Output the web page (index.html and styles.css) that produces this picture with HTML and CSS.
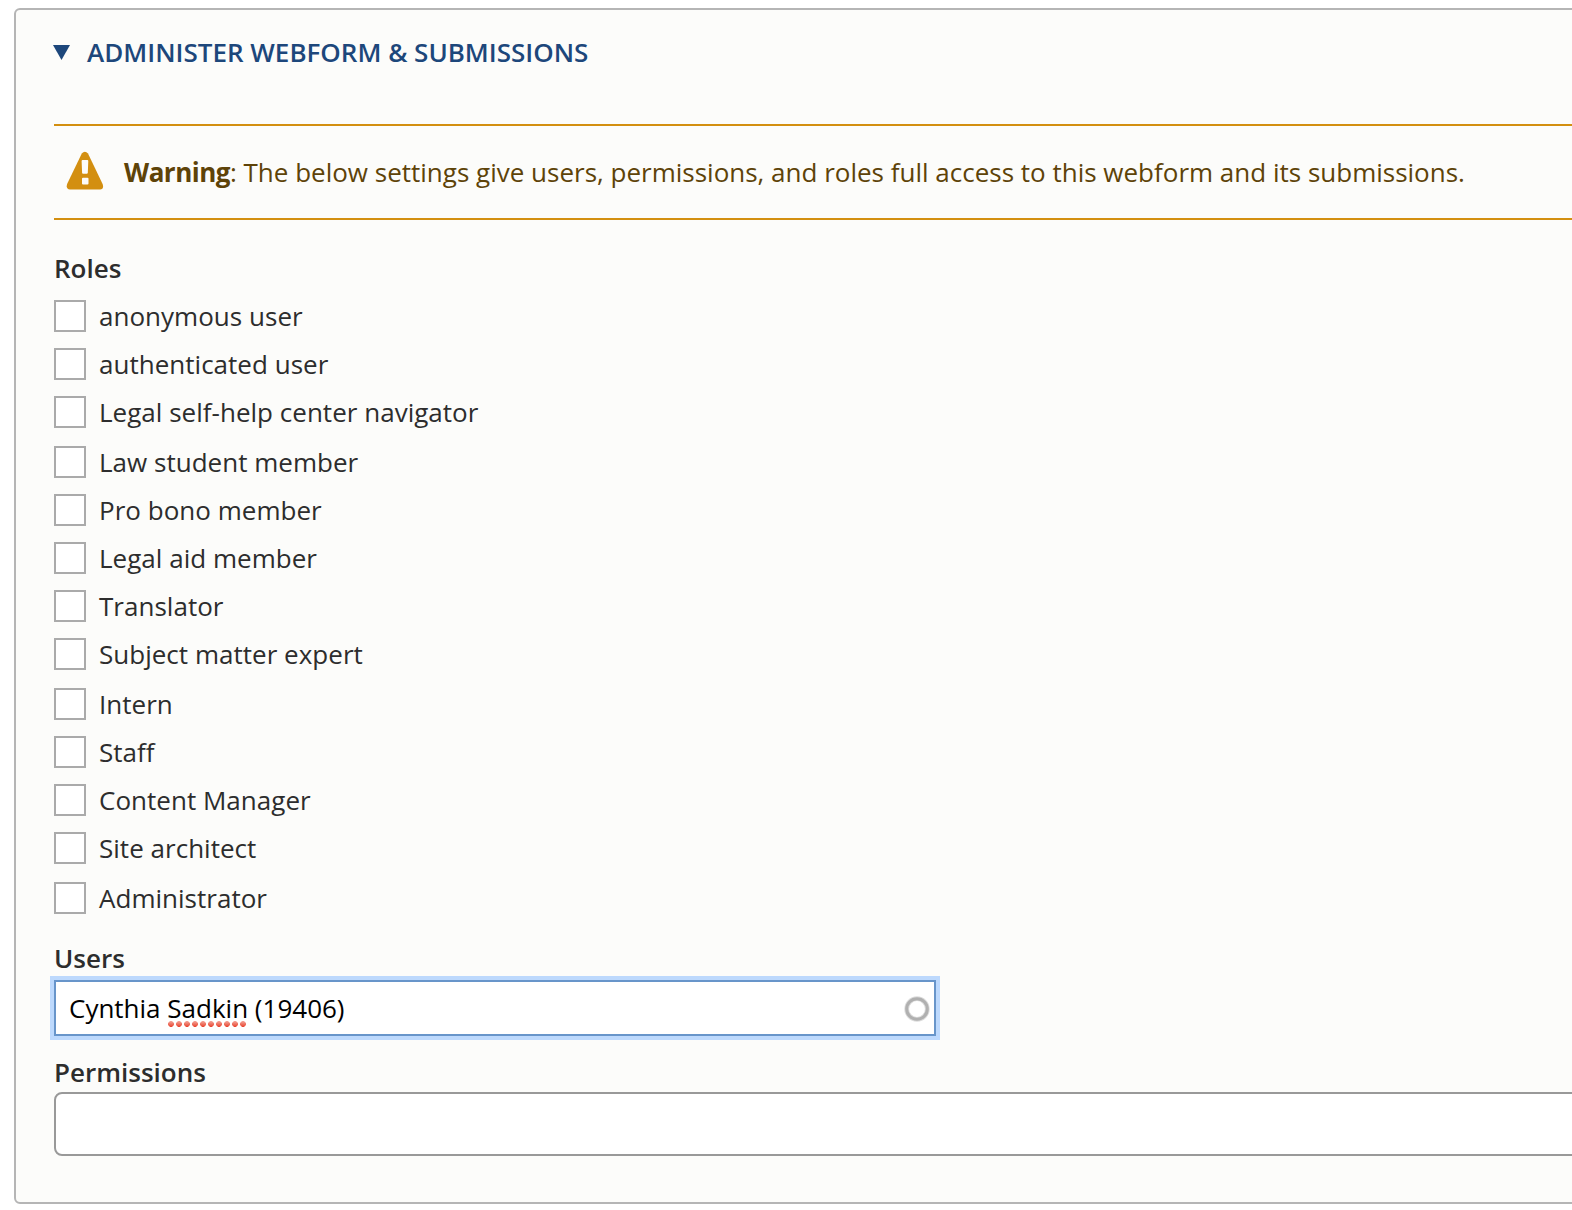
FILE: index.html
```html
<!DOCTYPE html>
<html lang="en">
<head>
<meta charset="utf-8">
<title>Webform access</title>
<link rel="stylesheet" href="styles.css">
</head>
<body>
<section class="panel">
  <h2 class="panel-title"><svg class="arrow" width="18" height="15" viewBox="0 0 18 15"><path d="M0 0h17L8.500 15z" fill="#1d477b"/></svg><span class="title-text">Administer webform &amp; submissions</span></h2>
  <div class="warning">
    <svg class="warning-icon" width="38" height="40" viewBox="0 0 38 40"><path d="M15.800 2.500Q18.800-1 22 2.500L36.600 33Q38.300 38 34 38.600H4Q-.4 38 1.100 33Z" fill="#d38f10"/><path d="M16.300 9h5.400l.6.800-.5 12.200-.7.800h-4.400l-.6-.8-.5-12.200zM17 26.800h4.500q1 0 1 1v4.700q0 1-1 1H17q-1 0-1-1v-4.700q0-1 1-1z" fill="#fcfcfa"/></svg>
    <p class="warning-text"><b>Warning</b>: The below settings give users, permissions, and roles full access to this webform and its submissions.</p>
  </div>
  <div class="label">Roles</div>
  <div class="roles">
    <label class="role"><input type="checkbox" class="box"><span>anonymous user</span></label>
    <label class="role"><input type="checkbox" class="box"><span>authenticated user</span></label>
    <label class="role wide"><input type="checkbox" class="box"><span>Legal self-help center navigator</span></label>
    <label class="role"><input type="checkbox" class="box"><span>Law student member</span></label>
    <label class="role"><input type="checkbox" class="box"><span>Pro bono member</span></label>
    <label class="role"><input type="checkbox" class="box"><span>Legal aid member</span></label>
    <label class="role"><input type="checkbox" class="box"><span>Translator</span></label>
    <label class="role wide"><input type="checkbox" class="box"><span>Subject matter expert</span></label>
    <label class="role"><input type="checkbox" class="box"><span>Intern</span></label>
    <label class="role"><input type="checkbox" class="box"><span>Staff</span></label>
    <label class="role"><input type="checkbox" class="box"><span>Content Manager</span></label>
    <label class="role wide"><input type="checkbox" class="box"><span>Site architect</span></label>
    <label class="role"><input type="checkbox" class="box"><span>Administrator</span></label>
  </div>
  <div class="label users-label">Users</div>
  <div class="users-field"><span class="value">Cynthia <span class="misspelled">Sadkin</span> (19406)</span><svg class="throbber" width="26" height="26" viewBox="0 0 26 26"><circle cx="13" cy="13" r="10.300" fill="none" stroke="#dcdcdc" stroke-width="4.800"/><circle cx="13" cy="13" r="10.300" fill="none" stroke="#b0b0b0" stroke-width="3"/></svg></div>
  <div class="label permissions-label">Permissions</div>
  <div class="permissions-field"></div>
</section>
</body>
</html>
```
FILE: styles.css
```css
* { box-sizing: border-box; }
body {
  margin: 0;
  padding: 8px 0 0 14px;
  background: #fff;
  color: #2d2d2d;
  font: 26px/48px "Open Sans", sans-serif;
  overflow: hidden;
}
.panel {
  width: 1620px;
  height: 1196px;
  padding: 18px 38px 0;
  border: 2px solid #b5b5b5;
  border-radius: 6px;
  background: #fcfcfa;
}
.panel-title {
  display: flex;
  align-items: center;
  gap: 16px;
  height: 48px;
  margin: 0 0 48px -1px;
  color: #1d477b;
  font-size: 26px;
  font-weight: 600;
  text-transform: uppercase;
}
.title-text { white-space: nowrap; }
.warning {
  display: flex;
  align-items: flex-start;
  height: 96px;
  padding: 22px 0 0 12px;
  border: solid #d38f10;
  border-width: 2px 0;
  color: #5e4308;
}
.warning-icon { flex: none; margin-top: 3px; }
.warning-text { margin: 0 0 0 20px; white-space: nowrap; }
.warning-text b { font-weight: 700; letter-spacing: -0.5px; }
.label { height: 48px; font-weight: 600; }
.warning + .label { margin-top: 24px; }
.role { display: flex; height: 48px; gap: 13px; letter-spacing: 0.02px; }
.wide { height: 50px; }
.box {
  appearance: none;
  flex: none;
  width: 32px;
  height: 32px;
  margin: 8px 0 0;
  border: 2px solid #aaa;
  background: #fff;
}
.users-label { margin-top: 12px; height: 46px; }
.users-field {
  display: flex;
  align-items: center;
  justify-content: space-between;
  width: 882px;
  height: 56px;
  padding: 0 4px 0 13px;
  border: 2px solid #6895ca;
  background: #fff;
  box-shadow: 0 0 0 4px #bdd9fd;
  color: #000;
}
.misspelled {
  padding-bottom: 1px;
  background:
    linear-gradient(#fff, #fff) 100% 100% / 1px 6px no-repeat,
    radial-gradient(circle at 3px 3px, transparent 2.6px, #fff 3.2px) 1px 100% / 8px 6px repeat-x,
    linear-gradient(#f3a79c, #e9412c) 0 100% / 100% 6px no-repeat;
}
.throbber { position: relative; top: 1px; }
.permissions-label { margin-top: 12px; height: 44px; }
.permissions-field {
  height: 64px;
  border: 2px solid #999;
  border-radius: 8px;
  background: #fff;
}
```
